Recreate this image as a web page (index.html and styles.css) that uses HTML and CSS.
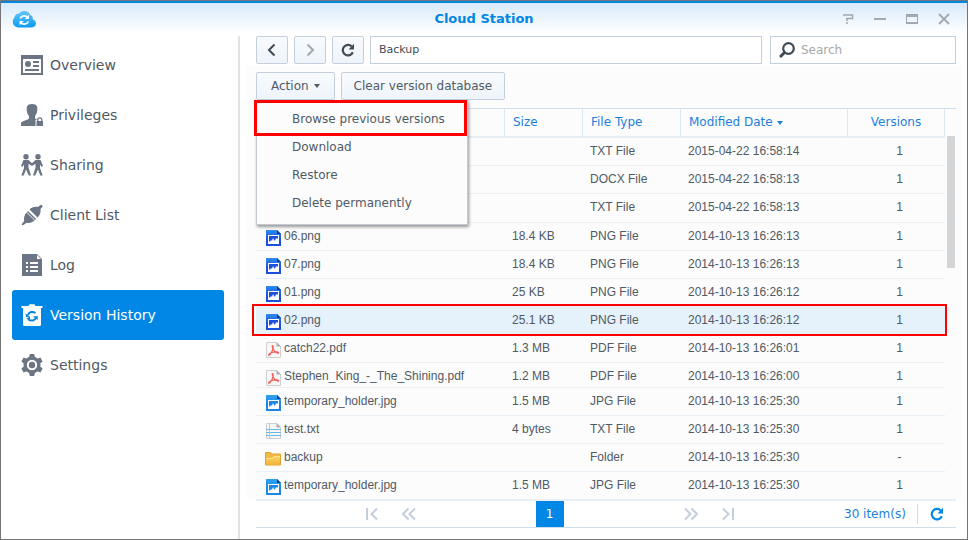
FILE: index.html
```html
<!DOCTYPE html>
<html lang="en">
<head>
<meta charset="utf-8">
<title>Cloud Station</title>
<link rel="stylesheet" href="styles.css">
</head>
<body>
<svg class="defs" aria-hidden="true">
  <defs>
    <linearGradient id="cloud" x1="0" y1="0" x2="0" y2="1"><stop offset="0" stop-color="#62c8fb"/><stop offset="1" stop-color="#0c9cf2"/></linearGradient>
    <linearGradient id="folder" x1="0" y1="0" x2="0" y2="1"><stop offset="0" stop-color="#fbd568"/><stop offset="1" stop-color="#f0b236"/></linearGradient>
    <linearGradient id="shade" x1="0" y1="0" x2="0" y2="1"><stop offset="0" stop-color="#3bb4ff" stop-opacity=".6"/><stop offset=".6" stop-color="#3bb4ff" stop-opacity="0"/></linearGradient>
    <symbol id="picture" viewBox="0 0 16 16">
      <path d="M1 0h11l4 4v12H1z" fill="currentColor"/>
      <path d="M1 0h11l4 4v12H1z" fill="url(#shade)"/>
      <path d="M12 0l4 4h-4z" fill="#0b3f9c"/>
      <path d="M3 5h11v9H3z" fill="#fff"/>
      <path d="M4 6h9v7H4z" fill="currentColor"/>
      <path d="M4 13v-3l1-1 1 2 1-3 1 1 1 3 1-3 1-1 1-1v6z" fill="#fff" opacity=".3"/>
      <path d="M4 6h9v2l-1 1-1-1-1 3-1-1-1-2-1 3-1-1-1 2-1-1z" fill="currentColor"/>
      <path d="M4 13v-2l1 1 1-2 1 1 1-3 1 2 1 1 1-3 1 1 1-1v5z" fill="#fff"/>
    </symbol>
    <symbol id="pdf" viewBox="0 0 16 16">
      <path d="M1.500.5h10l4 4v11h-14z" fill="#f7f7f7" stroke="#cfcfcf"/>
      <path d="M11.500 0l4.500 4.500h-4.500z" fill="#a9adb3"/>
      <path d="M7.500 3.500c1.300 0 .6 3.500-.6 6-1.200 2.500-2.400 4.200-3.200 3.700-.6-.8 1.500-2.300 4.500-3 2.800-.6 5.500-.3 5.500.6 0 .9-2.300.2-4-1.600-1.600-1.800-3.200-5.700-2.200-5.700z" fill="none" stroke="#f0605c" stroke-width="1.200"/>
    </symbol>
    <symbol id="text" viewBox="0 0 16 16">
      <path d="M1.500.5h10l4 4v11h-14z" fill="#f8f8f8" stroke="#cfcfcf"/>
      <path d="M11.500 0l4.500 4.500h-4.500z" fill="#a9adb3"/>
      <path d="M1 6.500h15M1 9.500h15M1 12.500h15" stroke="#6cb6e8"/>
      <path d="M4.500 1v14" stroke="#f0b4ae"/>
    </symbol>
    <symbol id="dir" viewBox="0 0 16 16">
      <path d="M.5 1.500h5l1.500 1.500h8.500v11H.5z" fill="#f3b940" stroke="#dda235"/>
      <path d="M1 7h6l2-2h6v9H1z" fill="url(#folder)"/>
      <path d="M1 7.500h6.500l2-2H15" fill="none" stroke="#fde596"/>
    </symbol>
    <symbol id="reload" viewBox="0 0 14 14">
      <path d="M11.800 9.200A5.200 5.200 0 1 1 10.800 3.600" fill="none" stroke="currentColor" stroke-width="2.200"/>
      <path d="M13 .8v5.700H7.500z" fill="currentColor"/>
    </symbol>
  </defs>
</svg>
<div class="window">
  <header class="titlebar">
    <svg class="logo" viewBox="0 0 24 18" aria-hidden="true">
      <path d="M6 17.500A5.800 5.800 0 0 1 2.300 7.800 4.500 4.500 0 0 1 7 3.500 6.500 6.500 0 0 1 18.300 5a4 4 0 0 1 2.500 4.300c2.600 1 3.600 3.200 3 5.200-.5 2-2.300 3-4.800 3z" fill="url(#cloud)"/>
      <path d="M8 8.500c1.500-3 5.500-3.500 8-1.200M16.500 11.500c-1.500 3-5.500 3.500-8 1.200" fill="none" stroke="#fff" stroke-width="1.600"/>
      <path d="M17 4.800V9h-4.300zM7.500 15.200V11h4.300z" fill="#fff"/>
    </svg>
    <h1>Cloud Station</h1>
    <div class="controls">
      <button aria-label="Help"><svg viewBox="0 0 12 12"><path d="M1 2h9.500v3.500H5v2.500M4 10h2" fill="none" stroke="currentColor" stroke-width="1.500"/></svg></button>
      <button aria-label="Minimize"><svg viewBox="0 0 12 12"><path d="M0 6h12" stroke="currentColor" stroke-width="2"/></svg></button>
      <button aria-label="Maximize"><svg viewBox="0 0 12 12"><path d="M0 1h12v10H0zM1 4v5h10V4z" fill="currentColor" fill-rule="evenodd"/></svg></button>
      <button aria-label="Close"><svg viewBox="0 0 12 12"><path d="M1 1l10 10M11 1L1 11" stroke="currentColor" stroke-width="1.800"/></svg></button>
    </div>
  </header>
  <div class="body">
    <nav class="sidebar">
      <a href="#"><svg viewBox="0 0 22 22"><path d="M0 1h22v20H0zM2 5v14h18V5z" fill="currentColor" fill-rule="evenodd"/><circle cx="7" cy="10" r="3" fill="currentColor"/><path d="M12 8h6M12 12h6M4 16h14" stroke="currentColor" stroke-width="2"/></svg>Overview</a>
      <a href="#"><svg viewBox="0 0 22 22"><path d="M6 2.500C7-.8 15-.8 16 2.500c.8 3 .2 7-2 9.500v2.500l2 1.200V22H0v-3c.5-2 6-2.500 8-4.500V12C5.800 9.500 5.200 5.500 6 2.500z" fill="currentColor"/><path d="M14.500 22v-6h1.500c0-3 5-3 5 0h1v6z" fill="#fff"/><path d="M15.500 17H22v5h-6.500z" fill="currentColor"/><path d="M16.800 17v-1.200a2 2 0 0 1 4 0V17" fill="none" stroke="currentColor" stroke-width="1.300"/></svg>Privileges</a>
      <a href="#"><svg viewBox="0 0 22 22"><g fill="currentColor"><circle cx="5" cy="2.700" r="2.700"/><circle cx="17" cy="2.700" r="2.700"/><path d="M2.500 6h5L11 9.200 14.500 6h5L22 12l-1.600.8L19 10.500v3.500l2.600 7.500h-2.300L17 15.500l-2.800 6H12l2.500-8v-3.700L11 12 7.500 9.800v3.700l2.500 8H7.800l-2.800-6-2.300 6H.4L3 14v-3.500l-1.400 2.300L0 12z"/></g></svg>Sharing</a>
      <a href="#"><svg viewBox="0 0 22 22"><path d="M21 1l.8 1.500L19.500 5c.6 4-1 6.500-3 8.500L8.500 5.500c2-2 5-3.200 8.500-2.500l2.500-2z" fill="currentColor"/><path d="M5.500 8.500l8 8c-2.300 2-5 3-8 2.200L2.500 21l-1.500.3L.8 20 3.200 17c-.7-3 .3-6.300 2.300-8.500z" fill="currentColor"/><path d="M6.500 7.500l8 8" stroke="currentColor" stroke-width="1.600"/></svg>Client List</a>
      <a href="#"><svg viewBox="0 0 22 22"><path d="M1 0h15l5 5v17H1z" fill="currentColor"/><path d="M16 1v4h4z" fill="#fff"/><path d="M5 9h2m2 0h8M5 13h2m2 0h8M5 17h2m2 0h8" stroke="#fff" stroke-width="2"/></svg>Log</a>
      <a href="#" class="active" aria-current="page"><svg viewBox="0 0 22 22"><path d="M.5 2H7.500L8.500.3h5L14.500 2h7v2H20v16.500q0 1.500-1.500 1.500h-15Q2 22 2 20.500V4H.5z" fill="currentColor"/><path d="M7 11c1-3.200 4.500-4 7.500-2M15 13.500c-1 3.200-4.500 4-7.500 2" fill="none" stroke="#0086e5" stroke-width="2"/><path d="M4.500 9.500L9 12.800l-4 .2zM12 12.500l4.700-.5v4zM9 17.500v-5l-3.500 2z" fill="#0086e5"/></svg>Version History</a>
      <a href="#"><svg viewBox="0 0 22 22"><g fill="currentColor"><circle cx="11" cy="11" r="8.500"/><path id="tooth" d="M8 4l.8-4h4.400L14 4v14l-.8 4H8.800L8 18z"/><use href="#tooth" transform="rotate(60 11 11)"/><use href="#tooth" transform="rotate(120 11 11)"/></g><circle cx="11" cy="11" r="4.200" fill="none" stroke="#fff" stroke-width="2"/></svg>Settings</a>
    </nav>
    <main>
      <div class="toolbar">
        <button class="btn square" aria-label="Back"><svg viewBox="0 0 14 14"><path d="M9.500 1.500L4 7l5.500 5.500" fill="none" stroke="currentColor" stroke-width="2"/></svg></button>
        <button class="btn square dim" aria-label="Forward"><svg viewBox="0 0 14 14"><path d="M4.500 1.500L10 7l-5.500 5.500" fill="none" stroke="currentColor" stroke-width="2"/></svg></button>
        <button class="btn square" aria-label="Reload"><svg viewBox="0 0 14 14"><use href="#reload"/></svg></button>
        <input class="path" type="text" value="Backup" aria-label="Path">
        <label class="search"><svg viewBox="0 0 16 16"><circle cx="9.500" cy="6.500" r="5.300" fill="none" stroke="currentColor" stroke-width="2.200"/><path d="M5.500 10.500L1 15" stroke="currentColor" stroke-width="3"/></svg><input type="search" placeholder="Search" aria-label="Search"></label>
      </div>
      <div class="panel">
        <div class="actions">
          <div class="dropdown">
            <button class="btn action" aria-expanded="true">Action<span class="caret"></span></button>
            <ul class="menu">
              <li class="marked"><button>Browse previous versions</button></li>
              <li><button>Download</button></li>
              <li><button>Restore</button></li>
              <li><button>Delete permanently</button></li>
            </ul>
          </div>
          <button class="btn clear">Clear version database</button>
        </div>
        <div class="list">
          <table>
            <colgroup><col><col class="c-size"><col class="c-type"><col class="c-date"><col class="c-ver"></colgroup>
            <thead><tr><th></th><th>Size</th><th>File Type</th><th>Modified Date<span class="caret"></span></th><th>Versions</th></tr></thead>
            <tbody>
              <tr><td></td><td></td><td>TXT File</td><td>2015-04-22 16:58:14</td><td>1</td></tr>
              <tr><td></td><td></td><td>DOCX File</td><td>2015-04-22 16:58:13</td><td>1</td></tr>
              <tr class="tall"><td></td><td></td><td>TXT File</td><td>2015-04-22 16:58:13</td><td>1</td></tr>
              <tr><td><span class="file png"><svg><use href="#picture"/></svg>06.png</span></td><td>18.4 KB</td><td>PNG File</td><td>2014-10-13 16:26:13</td><td>1</td></tr>
              <tr><td><span class="file png"><svg><use href="#picture"/></svg>07.png</span></td><td>18.4 KB</td><td>PNG File</td><td>2014-10-13 16:26:13</td><td>1</td></tr>
              <tr><td><span class="file png"><svg><use href="#picture"/></svg>01.png</span></td><td>25 KB</td><td>PNG File</td><td>2014-10-13 16:26:12</td><td>1</td></tr>
              <tr class="selected"><td><span class="file png"><svg><use href="#picture"/></svg>02.png</span></td><td>25.1 KB</td><td>PNG File</td><td>2014-10-13 16:26:12</td><td>1</td></tr>
              <tr><td><span class="file"><svg><use href="#pdf"/></svg>catch22.pdf</span></td><td>1.3 MB</td><td>PDF File</td><td>2014-10-13 16:26:01</td><td>1</td></tr>
              <tr class="short"><td><span class="file"><svg><use href="#pdf"/></svg>Stephen_King_-_The_Shining.pdf</span></td><td>1.2 MB</td><td>PDF File</td><td>2014-10-13 16:26:00</td><td>1</td></tr>
              <tr><td><span class="file jpg"><svg><use href="#picture"/></svg>temporary_holder.jpg</span></td><td>1.5 MB</td><td>JPG File</td><td>2014-10-13 16:25:30</td><td>1</td></tr>
              <tr><td><span class="file"><svg><use href="#text"/></svg>test.txt</span></td><td>4 bytes</td><td>TXT File</td><td>2014-10-13 16:25:30</td><td>1</td></tr>
              <tr><td><span class="file"><svg><use href="#dir"/></svg>backup</span></td><td></td><td>Folder</td><td>2014-10-13 16:25:30</td><td>-</td></tr>
              <tr><td><span class="file jpg"><svg><use href="#picture"/></svg>temporary_holder.jpg</span></td><td>1.5 MB</td><td>JPG File</td><td>2014-10-13 16:25:30</td><td>1</td></tr>
            </tbody>
          </table>
          <div class="scroll"><div class="thumb"></div></div>
        </div>
      </div>
      <footer class="paging">
        <div class="pager">
          <button aria-label="First page"><svg viewBox="0 0 14 14"><path d="M2 1v12M12 1.500L6.500 7l5.500 5.500" fill="none" stroke="currentColor" stroke-width="2"/></svg></button>
          <button aria-label="Previous page"><svg viewBox="0 0 14 14"><path d="M6.500 1.500L1 7l5.500 5.500M13 1.500L7.500 7l5.500 5.500" fill="none" stroke="currentColor" stroke-width="2"/></svg></button>
          <button class="page" aria-current="page">1</button>
          <button aria-label="Next page"><svg viewBox="0 0 14 14"><path d="M1 1.500L6.500 7 1 12.500M7.500 1.500L13 7l-5.500 5.500" fill="none" stroke="currentColor" stroke-width="2"/></svg></button>
          <button aria-label="Last page"><svg viewBox="0 0 14 14"><path d="M12 1v12M2 1.500L7.500 7 2 12.500" fill="none" stroke="currentColor" stroke-width="2"/></svg></button>
        </div>
        <div class="status"><span>30 item(s)</span><button aria-label="Refresh list"><svg viewBox="0 0 14 14"><use href="#reload"/></svg></button></div>
      </footer>
    </main>
  </div>
</div>
</body>
</html>
```
FILE: styles.css
```css
* { box-sizing: border-box; }
body {
  margin: 0;
  background: #fff;
  color: #505a64;
  font: 12px/14px "DejaVu Sans", Verdana, sans-serif;
}
button, input { font: inherit; color: inherit; }
button { margin: 0; padding: 0; border: 0; background: none; }
svg { display: block; flex: none; }
.defs { position: absolute; width: 0; height: 0; }

.window {
  display: flex;
  flex-direction: column;
  min-height: 100vh;
  border: 1px solid #757575;
}
.titlebar {
  display: grid;
  grid-template-columns: 1fr auto 1fr;
  align-items: center;
  height: 35px;
  padding: 0 17px 2px 11px;
  border-top: 2px solid #0086e5;
  background: linear-gradient(#d8eafa, #fff 30px);
}
.logo { width: 24px; height: 18px; }
h1 { margin: 0; padding-left: 6px; color: #0086e5; font-size: 13px; line-height: 16px; }
.controls { display: flex; justify-content: flex-end; gap: 20px; color: #a0a8b4; }
.controls svg { width: 12px; height: 12px; }

.body { display: flex; flex: 1; }
.sidebar {
  flex: none;
  width: 239px;
  padding: 4px 14px 0 11px;
  border-right: 2px solid #e2e2e2;
}
.sidebar a {
  display: flex;
  align-items: center;
  gap: 7px;
  height: 50px;
  padding-left: 9px;
  border-radius: 3px;
  color: #505a64;
  font-size: 14px;
  text-decoration: none;
}
.sidebar svg { width: 22px; height: 22px; color: #6b7583; }
.sidebar .active { background: #0086e5; color: #fff; }
.sidebar .active svg { color: #fff; }

main { display: flex; flex: 1; flex-direction: column; min-width: 0; padding: 0 11px 11px 16px; }
.toolbar { display: flex; gap: 6px; height: 30px; padding-bottom: 2px; }
.btn {
  display: flex;
  align-items: center;
  justify-content: center;
  height: 28px;
  padding: 0 14px;
  border: 1px solid #c3cfdd;
  border-radius: 2px;
  background: linear-gradient(#f8fbfe, #eef4fa);
}
.btn.clear { padding: 0 12px; }
.square { flex: none; width: 32px; padding: 0; color: #414b55; }
.btn.square { padding: 0; }
.square svg { width: 14px; height: 14px; }
.dim { color: #a0a8b4; }
.path {
  flex: 1;
  min-width: 0;
  padding: 0 8px;
  border: 1px solid #c3cfdd;
  color: #414b55;
  font-size: 11px;
}
.search {
  display: flex;
  align-items: center;
  gap: 6px;
  width: 186px;
  margin-left: 2px;
  padding: 0 8px;
  border: 1px solid #c3cfdd;
  color: #414b55;
}
.search svg { width: 16px; height: 16px; }
.search input { flex: 1; min-width: 0; padding: 0; border: 0; outline: 0; }
.search input::placeholder { color: #a8a8a8; }

.panel { margin: 0 -5px 0 -10px; padding: 6px 5px 0 10px; background: #fcfcfc; }
.actions { display: flex; gap: 6px; }
.caret {
  display: inline-block;
  margin-left: 5px;
  border: 3px solid transparent;
  border-top: 4px solid currentColor;
  border-bottom: 0;
}
.dropdown { position: relative; }
.menu {
  position: absolute;
  z-index: 2;
  top: 28px;
  left: 0;
  width: 212px;
  margin: 0;
  padding: 5px 0 7px;
  border: 1px solid #c3cad4;
  border-top: 0;
  background: #fcfcfc;
  box-shadow: 1px 2px 3px #0006;
  list-style: none;
}
.menu button { width: 100%; height: 28px; padding-left: 35px; text-align: left; }
.marked { position: relative; }
.marked::after {
  content: "";
  position: absolute;
  inset: -5px 0 -3px -3px;
  border: 3px solid #f00;
  pointer-events: none;
}

.list { display: flex; margin-top: 8px; border-top: 1px solid #cfdeec; }
table { flex: 1; min-width: 0; table-layout: fixed; border-spacing: 0; }
.c-size { width: 78px; }
.c-type { width: 98px; }
.c-date { width: 167px; }
.c-ver { width: 97px; }
th {
  height: 28px;
  padding: 0 0 2px 8px;
  border-right: 1px solid #dbe7f3;
  border-bottom: 1px solid #e6eef5;
  color: #1c7fdc;
  font-weight: normal;
  text-align: left;
}
th .caret { margin-left: 4px; vertical-align: 1px; }
td {
  height: 28px;
  padding: 6px 0 0 7px;
  border-top: 1px solid #e9f0f5;
  font-family: "Liberation Sans", Arial, sans-serif;
  vertical-align: top;
}
th:last-child, td:last-child { padding-left: 6px; text-align: center; }
th:last-child { padding-left: 0; }
td:first-child { padding-left: 9px; }
.tall td { height: 29px; }
.short td { height: 25px; }
.file { display: flex; gap: 3px; height: 14px; }
.file svg { width: 16px; height: 16px; margin-top: 1px; }
.png svg { color: #1c50dc; }
.jpg svg { color: #1c86e4; }
.selected { position: relative; background: #e5f1fb; }
.selected::after {
  content: "";
  position: absolute;
  inset: -2px -2px -2px -4px;
  border: 2px solid #f00;
}
.scroll { width: 11px; padding: 27px 1px 0 2px; }
.thumb { height: 132px; background: #d3d4d6; }

.paging {
  display: flex;
  height: 29px;
  border-top: 2px solid #e8eff5;
  border-bottom: 1px solid #cfdeec;
}
.pager { display: flex; flex: 1; align-items: center; justify-content: center; gap: 23px; padding-right: 1px; color: #c3cfdd; }
.pager svg, .status svg { width: 14px; height: 14px; }
.page { align-self: stretch; width: 28px; margin: 0 97px; background: #0086e5; color: #fff; }
.status { display: flex; align-items: center; width: 112px; color: #1c7fdc; }
.status span { flex: 1; }
.status button { height: 20px; padding: 0 12px; border-left: 1px solid #cfdeec; color: #0086e5; }
```
